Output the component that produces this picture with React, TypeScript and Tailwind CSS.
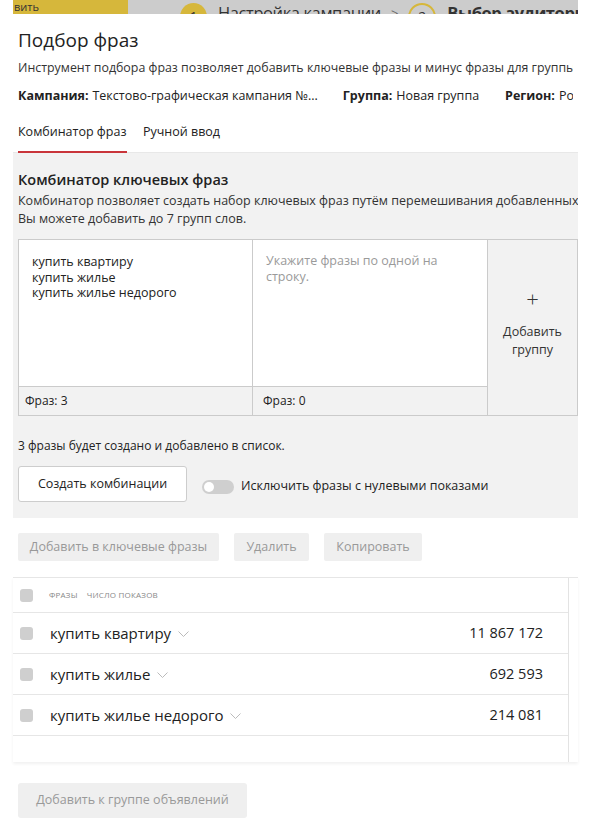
import React from "react";

const font = { fontFamily: '"Open Sans", "Noto Sans", Arial, sans-serif' };

function Chevron() {
  return (
    <svg width="11" height="7" viewBox="0 0 11 7" className="ml-[7px] mt-[2px]">
      <polyline points="0.5,0.5 5.5,5.5 10.5,0.5" fill="none" stroke="#bbb" strokeWidth="1" />
    </svg>
  );
}

function Row({ phrase, count }: { phrase: string; count: string }) {
  return (
    <div className="flex items-center h-[41px] border-b border-[#e6e6e6] pl-[7px] pr-[25px]">
      <div className="w-[13px] h-[13px] rounded-[3px] bg-[#cfcfcf]" />
      <div className="ml-[17px] flex items-center text-[15px] text-[#222]">
        {phrase}
        <Chevron />
      </div>
      <div className="ml-auto text-[14.5px] text-[#222]">{count}</div>
    </div>
  );
}

export default function App() {
  return (
    <div className="relative w-[591px] h-[819px] overflow-hidden bg-white" style={font}>
      {/* background page strip */}
      <div className="flex h-[14px] overflow-hidden">
        <div className="w-[13px] bg-white" />
        <div className="w-[115px] bg-[#d6b73b] text-[11px] leading-[11px] text-[#333] pl-[1px] pt-[1px]">вить</div>
        <div className="w-[450px] bg-[#cccccc] flex items-start pt-[3px] pl-[52px] leading-[24px] text-[#333] whitespace-nowrap overflow-hidden">
          <div className="w-[27px] h-[27px] rounded-full bg-[#d6b73b] flex justify-center text-[14px] leading-[27px] shrink-0">1</div>
          <span className="ml-[11px] mt-[-2px] text-[16.5px] tracking-[-0.4px]">Настройка кампании</span>
          <span className="ml-[10px] mt-[-2px] text-[13px] text-[#666]">&gt;</span>
          <div className="ml-[10px] w-[28px] h-[28px] rounded-full border-2 border-[#d6b73b] flex justify-center text-[14px] leading-[24px] shrink-0">2</div>
          <span className="ml-[11px] mt-[-2px] text-[16.5px] font-bold tracking-[-0.4px]">Выбор аудитории</span>
        </div>
        <div className="flex-1 bg-white" />
      </div>

      {/* modal */}
      <div className="pl-[13px] pr-[13px]">
        <div className="px-[5px]">
          <div className="text-[19px] leading-[24px] text-[#222] mt-[14px]">Подбор фраз</div>
          <div className="text-[12.4px] leading-[18px] text-[#333] mt-[7px] whitespace-nowrap overflow-hidden">
            Инструмент подбора фраз позволяет добавить ключевые фразы и минус фразы для группы объявлений
          </div>
          <div className="flex text-[12.5px] leading-[18px] text-[#222] mt-[10px] whitespace-nowrap overflow-hidden">
            <span className="font-bold">Кампания:</span>
            <span className="ml-[4px]">Текстово-графическая кампания №...</span>
            <span className="font-bold ml-[25px]">Группа:</span>
            <span className="ml-[4px]">Новая группа</span>
            <span className="font-bold ml-[26px]">Регион:</span>
            <span className="ml-[4px]">Россия</span>
          </div>
        </div>

        {/* tabs */}
        <div className="flex mt-[18px] border-b border-[#e8e8e8]">
          <div className="ml-[5px] w-[109px] h-[30px] border-b-2 border-[#c9353a] text-[12.5px] leading-[18px] text-[#222] -mb-px">
            Комбинатор фраз
          </div>
          <div className="ml-[16px] text-[12.5px] leading-[18px] text-[#222]">Ручной ввод</div>
        </div>

        {/* gray panel */}
        <div className="bg-[#f2f2f2] pl-[5px] pt-[17px] pb-[16px]">
          <div className="text-[14.5px] leading-[20px] font-semibold text-[#222]">Комбинатор ключевых фраз</div>
          <div className="text-[12.5px] leading-[18px] text-[#333] mt-[2px] whitespace-nowrap overflow-hidden">
            Комбинатор позволяет создать набор ключевых фраз путём перемешивания добавленных слов.
            <br />
            Вы можете добавить до 7 групп слов.
          </div>

          <div className="mt-[11px] flex h-[177px] border border-[#cbcbcb] bg-white">
            <div className="w-[234px] flex flex-col border-r border-[#cbcbcb]">
              <div className="flex-1 pl-[13px] pt-[14px] text-[12.5px] leading-[15.5px] text-[#222]">
                купить квартиру
                <br />
                купить жилье
                <br />
                купить жилье недорого
              </div>
              <div className="h-[29px] border-t border-[#cbcbcb] bg-[#f2f2f2] pl-[6px] text-[12px] leading-[27px] text-[#222]">
                Фраз: 3
              </div>
            </div>
            <div className="w-[235px] flex flex-col border-r border-[#cbcbcb]">
              <div className="flex-1 pl-[13px] pt-[13px] text-[12.5px] leading-[16px] text-[#9a9a9a]">
                Укажите фразы по одной на
                <br />
                строку.
              </div>
              <div className="h-[29px] border-t border-[#cbcbcb] bg-[#f2f2f2] pl-[10px] text-[12px] leading-[27px] text-[#222]">
                Фраз: 0
              </div>
            </div>
            <div className="flex-1 bg-[#f2f2f2] flex flex-col items-center pt-[45px] text-[#333]">
              <div className="text-[22px] leading-[26px] font-light">+</div>
              <div className="mt-[12px] text-[12.5px] leading-[18px] text-center">
                Добавить
                <br />
                группу
              </div>
            </div>
          </div>

          <div className="mt-[21px] text-[12px] leading-[18px] text-[#222]">3 фразы будет создано и добавлено в список.</div>

          <div className="mt-[11px] flex items-center">
            <div className="w-[169px] h-[36px] bg-white border border-[#cdcdcd] rounded-[3px] flex items-center justify-center text-[12.5px] text-[#222]">
              Создать комбинации
            </div>
            <div className="ml-[15px] mt-[5px] w-[32px] h-[14px] rounded-full bg-[#cfcfcf] relative">
              <div className="absolute left-[2px] top-[2px] w-[10px] h-[10px] rounded-full bg-white" />
            </div>
            <div className="ml-[7px] mt-[5px] text-[12.5px] text-[#222]">Исключить фразы с нулевыми показами</div>
          </div>
        </div>

        {/* action buttons */}
        <div className="flex mt-[15px] px-[5px] gap-[15px] text-[12.5px] text-[#999]">
          <div className="w-[201px] h-[28px] bg-[#efefef] rounded-[2px] flex items-center justify-center">Добавить в ключевые фразы</div>
          <div className="w-[75px] h-[28px] bg-[#efefef] rounded-[2px] flex items-center justify-center">Удалить</div>
          <div className="w-[98px] h-[28px] bg-[#efefef] rounded-[2px] flex items-center justify-center">Копировать</div>
        </div>

        {/* table */}
        <div className="mt-[16px] border-t border-[#e6e6e6] shadow-[0_2px_3px_rgba(0,0,0,0.06)]">
          <div className="mr-[9px] border-r border-[#e3e3e3] h-[184px]">
            <div className="flex items-center h-[35px] border-b border-[#e6e6e6] pl-[7px]">
              <div className="w-[13px] h-[13px] rounded-[3px] bg-[#cfcfcf]" />
              <div className="ml-[16px] text-[8px] text-[#888] tracking-[0.2px]">ФРАЗЫ</div>
              <div className="ml-[9px] text-[8px] text-[#888] tracking-[0.2px]">ЧИСЛО ПОКАЗОВ</div>
            </div>
            <Row phrase="купить квартиру" count="11 867 172" />
            <Row phrase="купить жилье" count="692 593" />
            <Row phrase="купить жилье недорого" count="214 081" />
          </div>
        </div>

        <div className="mt-[21px] ml-[5px] w-[229px] h-[35px] bg-[#efefef] rounded-[3px] flex items-center justify-center text-[12.5px] text-[#999]">
          Добавить к группе объявлений
        </div>
      </div>
    </div>
  );
}
